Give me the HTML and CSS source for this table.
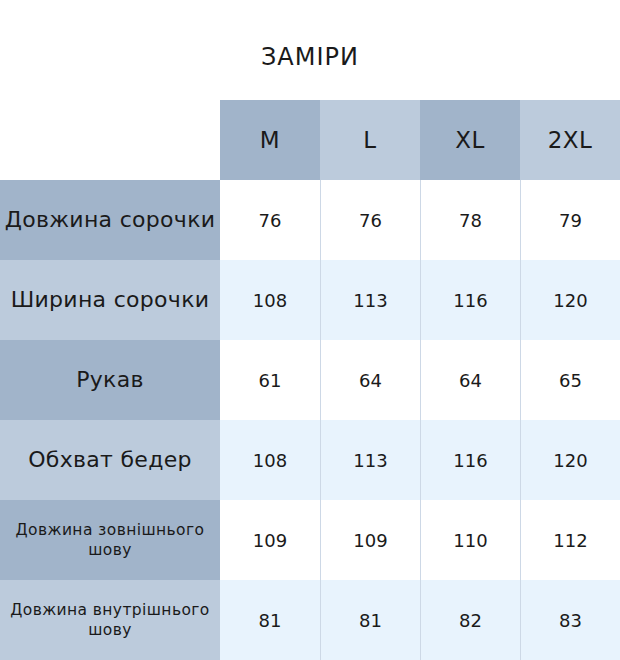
FILE: index.html
```html
<!DOCTYPE html>
<html lang="uk">
<head>
<meta charset="utf-8">
<link rel="stylesheet" href="styles.css">
</head>
<body>
<div class="page">
  <h1 class="title">ЗАМІРИ</h1>
  <div class="table">
    <div class="corner"></div>
    <div class="hd dark">M</div>
    <div class="hd light">L</div>
    <div class="hd dark">XL</div>
    <div class="hd light">2XL</div>

    <div class="lbl dark">Довжина сорочки</div>
    <div class="cell">76</div><div class="cell sep">76</div><div class="cell sep">78</div><div class="cell sep">79</div>

    <div class="lbl light">Ширина сорочки</div>
    <div class="cell alt">108</div><div class="cell alt sep">113</div><div class="cell alt sep">116</div><div class="cell alt sep">120</div>

    <div class="lbl dark">Рукав</div>
    <div class="cell">61</div><div class="cell sep">64</div><div class="cell sep">64</div><div class="cell sep">65</div>

    <div class="lbl light">Обхват бедер</div>
    <div class="cell alt">108</div><div class="cell alt sep">113</div><div class="cell alt sep">116</div><div class="cell alt sep">120</div>

    <div class="lbl dark small">Довжина зовнішнього шову</div>
    <div class="cell">109</div><div class="cell sep">109</div><div class="cell sep">110</div><div class="cell sep">112</div>

    <div class="lbl light small">Довжина внутрішнього шову</div>
    <div class="cell alt">81</div><div class="cell alt sep">81</div><div class="cell alt sep">82</div><div class="cell alt sep">83</div>
  </div>
</div>
</body>
</html>
```
FILE: styles.css
```css
* { box-sizing: border-box; }
html, body { margin: 0; padding: 0; background: #ffffff; }
body {
  font-family: "DejaVu Sans", "Noto Sans", sans-serif;
  color: #1a1a1a;
}
.page { width: 620px; }
.title {
  margin: 0;
  height: 100px;
  display: flex;
  align-items: center;
  justify-content: center;
  font-size: 24px;
  font-weight: 400;
  letter-spacing: 1px;
  padding-top: 14px;
}
.table {
  display: grid;
  grid-template-columns: 220px repeat(4, 100px);
  grid-auto-rows: 80px;
}
.hd, .lbl, .cell {
  display: flex;
  align-items: center;
  justify-content: center;
  text-align: center;
}
.hd { font-size: 23px; letter-spacing: 0.5px; }
.dark { background: #a1b4ca; }
.light { background: #bccbdc; }
.lbl { font-size: 22px; letter-spacing: 0.3px; line-height: 1.25; padding: 0; white-space: nowrap; }
.lbl.small { font-size: 15.5px; letter-spacing: 0.4px; padding: 0 8px; line-height: 1.3; white-space: normal; }
.cell { font-size: 18px; background: #ffffff; }
.cell.alt { background: #e8f3fd; }
.cell.sep { border-left: 1px solid #cdd8e6; }
```
